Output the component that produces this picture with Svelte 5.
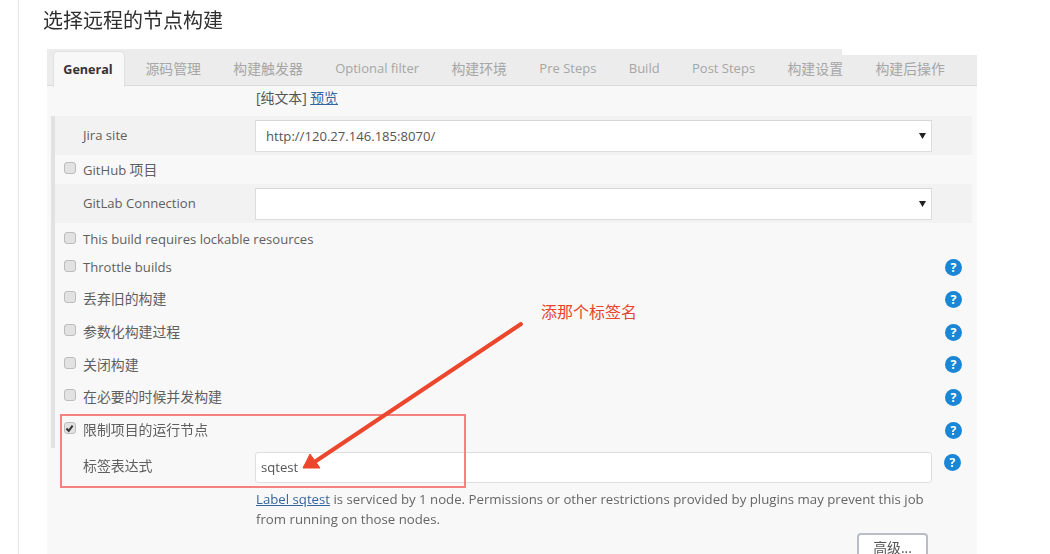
<script>
  const tabs = [
    { text: '源码管理' },
    { text: '构建触发器' },
    { text: 'Optional filter', latin: true },
    { text: '构建环境' },
    { text: 'Pre Steps', latin: true },
    { text: 'Build', latin: true },
    { text: 'Post Steps', latin: true },
    { text: '构建设置' },
    { text: '构建后操作' }
  ];
  const checks = ['丢弃旧的构建', '参数化构建过程', '关闭构建', '在必要的时候并发构建'];
</script>

{#snippet box(checked)}
  <span class="box">
    {#if checked}
      <svg viewBox="0 0 11 11" width="11" height="11"><path d="M2.5 5.5 L4.7 8 L8.6 2.6" fill="none" stroke="#333" stroke-width="2" /></svg>
    {/if}
  </span>
{/snippet}

{#snippet help()}
  <span class="help">?</span>
{/snippet}

{#snippet caret()}
  <svg class="caret" viewBox="0 0 7 6" width="7" height="6"><path d="M0 0H7L3.5 6Z" fill="#222" /></svg>
{/snippet}

<div class="article">
  <h2>选择远程的节点构建</h2>
  <div class="panel">
    <div class="tabs">
      <span class="tab active">General</span>
      {#each tabs as t}
        <span class="tab" class:latin={t.latin}>{t.text}</span>
      {/each}
    </div>
    <div class="preview"><span class="cjk">[纯文本]</span> <a class="cjk" href="#top">预览</a></div>
    <div class="rows">
      <div class="row field">
        <span class="flabel">Jira site</span>
        <div class="select"><span>http://120.27.146.185:8070/</span>{@render caret()}</div>
      </div>
      <div class="row check h29">{@render box(false)}<span>GitHub <span class="cjk">项目</span></span></div>
      <div class="row field">
        <span class="flabel">GitLab Connection</span>
        <div class="select"><span></span>{@render caret()}</div>
      </div>
      <div class="row check h30">{@render box(false)}<span>This build requires lockable resources</span></div>
      <div class="row check h31">{@render box(false)}<span>Throttle builds</span>{@render help()}</div>
      {#each checks as c}
        <div class="row check nudge">{@render box(false)}<span class="cjk">{c}</span>{@render help()}</div>
      {/each}
      <div class="row check last nudge">{@render box(true)}<span class="cjk">限制项目的运行节点</span>{@render help()}</div>
    </div>
    <div class="expr">
      <span class="flabel cjk">标签表达式</span>
      <div class="input">sqtest</div>
      {@render help()}
    </div>
    <div class="note"><a href="#top">Label sqtest</a> is serviced by 1 node. Permissions or other restrictions provided by plugins may prevent this job<br />from running on those nodes.</div>
    <div class="actions"><button>高级...</button></div>

    <div class="redbox"></div>
    <span class="callout">添那个标签名</span>
    <svg class="arrow" viewBox="0 0 930 505" width="930" height="505">
      <path d="M474 275 L266 414" fill="none" stroke="#ec462c" stroke-width="4" stroke-linecap="round" />
      <path d="M256 419 L263 405 L273 419 Z" fill="#ec462c" stroke="#ec462c" stroke-width="1" />
    </svg>
  </div>
</div>

<style>
  :global(body) {
    margin: 0;
    background: #fff;
  }
  .article {
    margin-left: 18px;
    height: 554px;
    box-sizing: border-box;
    border-left: 1px solid #e6e6f0;
    padding-left: 24px;
    overflow: hidden;
    font-family: "Open Sans", "Noto Sans CJK SC", sans-serif;
  }
  h2 {
    margin: 0;
    height: 49px;
    box-sizing: border-box;
    padding-top: 6px;
    font-weight: 400;
    font-size: 20px;
    line-height: 28px;
    color: #2f2f2f;
    font-family: "Noto Sans CJK SC", sans-serif;
    filter: blur(0.35px);
  }
  .panel {
    position: relative;
    margin-left: 4px;
    width: 930px;
    height: 505px;
    background: #f8f8f8;
    font-size: 13.1px;
    color: #5f5f5f;
    filter: blur(0.6px);
  }
  .cjk {
    font-size: 13.9px;
  }
  .tabs {
    display: flex;
    height: 37px;
    box-sizing: border-box;
    padding-left: 6px;
    border-bottom: 1px solid #dcdcdc;
    background: linear-gradient(#fff, #fff) top right / 135px 6px no-repeat, #ececec;
  }
  .tab {
    flex: none;
    padding: 10px 16.2px 0;
    font-size: 13.9px;
    line-height: 19px;
    color: #a6a6a6;
    white-space: nowrap;
  }
  .tab.latin {
    font-size: 13px;
  }
  .tab.active {
    box-sizing: border-box;
    width: 72px;
    height: 36px;
    margin: 2px 4.2px 0 0;
    padding: 8px 2px 0 0;
    text-align: center;
    font-weight: 700;
    font-size: 12.6px;
    color: #333;
    background: #f8f8f8;
    border: 1px solid #e0e0e0;
    border-bottom: none;
    border-radius: 5px 5px 0 0;
  }
  .preview {
    height: 30px;
    box-sizing: border-box;
    padding: 3px 0 0 209px;
    line-height: 18px;
    color: #555;
  }
  a {
    color: #34659e;
    text-decoration: underline;
  }
  .rows {
    margin-left: 4px;
    border-left: 4px solid #e2e2e2;
  }
  .row {
    display: flex;
    align-items: center;
    box-sizing: border-box;
  }
  .field {
    height: 39px;
    margin-right: 5px;
    background: #f2f2f2;
  }
  .flabel {
    flex: none;
    box-sizing: border-box;
    width: 200px;
    padding-left: 28px;
    line-height: 18px;
    margin-top: -2px;
  }
  .select {
    display: flex;
    align-items: center;
    justify-content: space-between;
    box-sizing: border-box;
    width: 677px;
    height: 32px;
    padding: 0 5px 0 10px;
    background: #fff;
    border: 1px solid #dcdcdc;
    border-top-color: #d6d6d6;
    color: #555;
  }
  .caret {
    flex: none;
  }
  .check {
    height: 32.7px;
    padding: 0 15px 0 8.5px;
    gap: 7.5px;
  }
  .h29 {
    height: 29px;
    padding-bottom: 1px;
  }
  .h30 {
    height: 30px;
    padding-top: 1px;
  }
  .h31 {
    height: 29px;
    padding-bottom: 1px;
  }
  .last {
    height: 35px;
    padding-bottom: 2px;
  }
  .box {
    flex: none;
    width: 12px;
    height: 12px;
    box-sizing: border-box;
    margin-top: -2px;
    border: 1px solid #bdbdbd;
    border-radius: 3px;
    background: #e2e2e2;
    line-height: 0;
  }
  .box svg {
    margin: 0 0 0 -0.5px;
  }
  .help {
    flex: none;
    width: 17px;
    height: 17px;
    margin-left: auto;
    border-radius: 50%;
    background: #1a86d6;
    color: #fff;
    font-size: 12.5px;
    font-weight: 700;
    line-height: 17px;
    text-align: center;
  }
  .nudge .help {
    margin-top: 2px;
  }
  .expr {
    display: flex;
    align-items: flex-start;
    height: 41px;
    box-sizing: border-box;
    padding: 4px 16px 0 8px;
  }
  .expr .flabel {
    margin-top: 5px;
  }
  .expr .help {
    margin-top: 2px;
  }
  .input {
    box-sizing: border-box;
    width: 677px;
    height: 31px;
    padding-left: 5px;
    line-height: 29px;
    background: #fff;
    border: 1px solid #dedede;
    border-radius: 3px;
    color: #555;
  }
  .note {
    padding-left: 209px;
    line-height: 20px;
    white-space: nowrap;
    color: #666;
    font-size: 13.22px;
  }
  .actions {
    display: flex;
    justify-content: flex-end;
    padding: 4px 49px 0 0;
  }
  button {
    width: 71px;
    height: 36px;
    box-sizing: border-box;
    padding: 0 0 5px;
    align-self: flex-start;
    background: #fff;
    border: 2px solid #b9bec6;
    border-radius: 4px;
    font: inherit;
    font-size: 13.9px;
    line-height: 18px;
    color: #555;
  }
  .redbox {
    position: absolute;
    left: 13px;
    top: 365px;
    width: 406px;
    height: 74px;
    box-sizing: border-box;
    border: 2px solid #f78080;
  }
  .callout {
    position: absolute;
    left: 494px;
    top: 250px;
    font-size: 16px;
    line-height: 24px;
    color: #e8442a;
    font-family: "Noto Sans CJK SC", sans-serif;
  }
  .arrow {
    position: absolute;
    left: 0;
    top: 0;
    pointer-events: none;
  }
</style>
